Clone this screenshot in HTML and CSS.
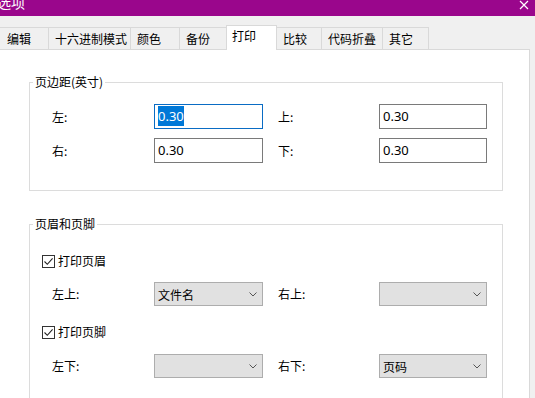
FILE: index.html
```html
<!DOCTYPE html>
<html lang="zh-CN">
<head>
    <meta charset="UTF-8">
    <title>选项</title>
    <link rel="stylesheet" href="styles.css">
</head>
<body>
    <div class="titlebar">
        <span class="title">选项</span>
        <svg class="close" width="10" height="10" viewBox="0 0 10 10">
            <path d="M1 1 L9 9 M9 1 L1 9" stroke="#fff" stroke-width="1.2" fill="none"/>
        </svg>
    </div>
    <div class="window">
        <div class="tabs">
            <div class="tab" style="width:49px">编辑</div>
            <div class="tab" style="width:82px">十六进制模式</div>
            <div class="tab" style="width:49px">颜色</div>
            <div class="tab" style="width:47px">备份</div>
            <div class="tab active" style="width:51px">打印</div>
            <div class="tab" style="width:45px">比较</div>
            <div class="tab" style="width:61px">代码折叠</div>
            <div class="tab" style="width:46px">其它</div>
        </div>
        <div class="panel">
            <fieldset class="group">
                <legend>页边距(英寸)</legend>
                <div class="grid margins">
                    <div class="lbl">左:</div>
                    <div class="input focus"><span class="sel">0.30</span></div>
                    <div class="lbl r">上:</div>
                    <div class="input">0.30</div>
                    <div class="lbl">右:</div>
                    <div class="input">0.30</div>
                    <div class="lbl r">下:</div>
                    <div class="input">0.30</div>
                </div>
            </fieldset>

            <fieldset class="group second">
                <legend>页眉和页脚</legend>
                <div class="check first">
                    <span class="box">
                        <svg width="11" height="11" viewBox="0 0 11 11"><path d="M1.5 5.5 L4.3 8.3 L9.6 2.4" stroke="#222" stroke-width="1.1" fill="none"/></svg>
                    </span>
                    打印页眉
                </div>
                <div class="grid row-sel">
                    <div class="lbl">左上:</div>
                    <div class="select"><span>文件名</span><svg width="8" height="5" viewBox="0 0 8 5"><path d="M0.5 0.5 L4 4 L7.5 0.5" stroke="#555" fill="none"/></svg></div>
                    <div class="lbl r">右上:</div>
                    <div class="select"><span></span><svg width="8" height="5" viewBox="0 0 8 5"><path d="M0.5 0.5 L4 4 L7.5 0.5" stroke="#555" fill="none"/></svg></div>
                </div>
                <div class="check second-check">
                    <span class="box">
                        <svg width="11" height="11" viewBox="0 0 11 11"><path d="M1.5 5.5 L4.3 8.3 L9.6 2.4" stroke="#222" stroke-width="1.1" fill="none"/></svg>
                    </span>
                    打印页脚
                </div>
                <div class="grid row-sel last">
                    <div class="lbl">左下:</div>
                    <div class="select"><span></span><svg width="8" height="5" viewBox="0 0 8 5"><path d="M0.5 0.5 L4 4 L7.5 0.5" stroke="#555" fill="none"/></svg></div>
                    <div class="lbl r">右下:</div>
                    <div class="select"><span>页码</span><svg width="8" height="5" viewBox="0 0 8 5"><path d="M0.5 0.5 L4 4 L7.5 0.5" stroke="#555" fill="none"/></svg></div>
                </div>
            </fieldset>
        </div>
    </div>
</body>
</html>
```

FILE: styles.css
```css
* {
    box-sizing: border-box;
}

html, body {
    margin: 0;
    height: 100%;
    overflow: hidden;
}

body {
    background: #f0f0f0;
    font-family: "Noto Sans CJK SC", sans-serif;
    font-size: 12px;
    color: #000;
}

.titlebar {
    height: 16px;
    background: #9a068c;
    display: flex;
    justify-content: space-between;
    overflow: hidden;
}

.title {
    color: #fff;
    font-size: 14px;
    line-height: 16px;
    margin-top: -6px;
    margin-left: -3px;
}

.close {
    margin: 0 6px 0 0;
    align-self: flex-start;
}

.window {
    width: 530px;
}

.tabs {
    height: 34px;
    display: flex;
    align-items: flex-end;
    border-bottom: 1px solid #d9d9d9;
}

.tab {
    height: 22px;
    line-height: 21px;
    padding-left: 6px;
    border-top: 1px solid #d9d9d9;
    border-right: 1px solid #d9d9d9;
    background: #f0f0f0;
    white-space: nowrap;
}

.tab:first-child {
    padding-left: 7px;
}

.tab.active {
    height: 25px;
    margin-bottom: -1px;
    background: #fff;
    border-left: 1px solid #d9d9d9;
    line-height: 19px;
    padding-left: 5px;
    margin-left: -1px;
}

.panel {
    background: #fff;
    border-right: 1px solid #d9d9d9;
    height: 348px;
    overflow: hidden;
    padding: 24px 0 0 29px;
}

.group {
    width: 474px;
    margin: 0;
    border: 1px solid #dcdcdc;
    padding: 14px 14px 27px 3px;
}

.group legend {
    padding: 0 2px;
    line-height: 16px;
}

.second {
    margin-top: 25px;
    padding-top: 21px;
}

.grid {
    display: grid;
    grid-template-columns: 102px 109px 116px 108px;
    row-gap: 9px;
    padding-left: 19px;
    align-items: center;
}

.lbl {
    line-height: 16px;
}

.lbl.r {
    padding-left: 15px;
}

.input {
    height: 25px;
    border: 1px solid #7a7a7a;
    font-family: "Noto Sans", sans-serif;
    font-size: 13px;
    line-height: 22px;
    padding-left: 3px;
}

.input.focus {
    border-color: #0a6cc4;
}

.sel {
    background: #0078d7;
    color: #fff;
    padding: 1px 0;
}

.check {
    display: flex;
    align-items: center;
    padding-left: 9px;
    line-height: 16px;
    height: 16px;
}

.box {
    width: 13px;
    height: 13px;
    border: 1px solid #333;
    margin-right: 3px;
    display: flex;
    align-items: center;
    justify-content: center;
}

.row-sel {
    margin-top: 13px;
}

.second-check {
    margin-top: 18px;
}

.row-sel.last {
    margin-top: 14px;
}

.select {
    height: 24px;
    background: #e1e1e1;
    border: 1px solid #adadad;
    display: flex;
    align-items: center;
    justify-content: space-between;
    padding: 0 5px 0 3px;
}
```
